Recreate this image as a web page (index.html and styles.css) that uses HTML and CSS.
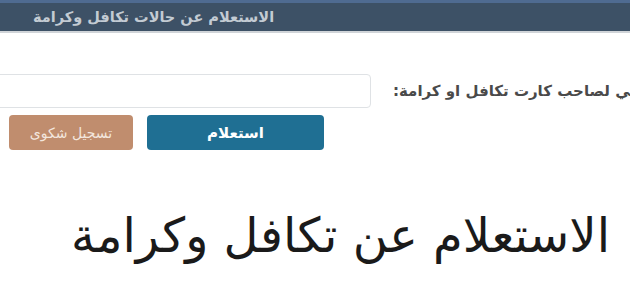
FILE: index.html
```html
<!DOCTYPE html>
<html lang="ar">
<head>
<meta charset="utf-8">
<link rel="stylesheet" href="styles.css">
</head>
<body>
<header class="topbar">
  <span class="topbar-title" dir="rtl">الاستعلام عن حالات تكافل وكرامة</span>
</header>
<main class="content">
  <div class="form-row">
    <input class="field" type="text">
    <label class="field-label" dir="rtl">الرقم القومي لصاحب كارت تكافل او كرامة:</label>
  </div>
  <div class="button-row">
    <button class="btn btn-complaint" dir="rtl">تسجيل شكوى</button>
    <button class="btn btn-query" dir="rtl">استعلام</button>
  </div>
  <h1 class="page-title" dir="rtl">الاستعلام عن تكافل وكرامة</h1>
</main>
</body>
</html>
```
FILE: styles.css
```css
html, body {
  margin: 0;
  padding: 0;
  background: #ffffff;
  overflow: hidden;
  width: 630px;
  height: 300px;
  font-family: "DejaVu Sans", sans-serif;
}
.topbar {
  height: 33px;
  background: #3d5166;
  border-top: 3px solid #4f6b91;
  box-sizing: border-box;
  border-bottom: 2px solid #d0d4d8;
  display: flex;
  align-items: center;
  padding-left: 33px;
}
.topbar-title {
  color: #c3cbd3;
  font-size: 14.5px;
  font-weight: bold;
  white-space: nowrap;
}
.content {
  display: flex;
  flex-direction: column;
}
.form-row {
  display: flex;
  align-items: center;
  margin-top: 41px;
  gap: 22px;
  white-space: nowrap;
}
.field {
  width: 381px;
  height: 34px;
  margin: 0 0 0 -10px;
  box-sizing: border-box;
  border: 1px solid #dfe2e5;
  border-radius: 4px;
  background: #fff;
  flex: none;
}
.field-label {
  color: #4a4a4a;
  font-size: 15px;
  font-weight: bold;
  flex: none;
}
.button-row {
  display: flex;
  gap: 14px;
  margin-top: 7px;
  padding-left: 9px;
}
.btn {
  height: 35px;
  border: none;
  border-radius: 4px;
  font-family: "DejaVu Sans", sans-serif;
  font-weight: bold;
  color: #fff;
  padding: 0;
}
.btn-complaint {
  width: 124px;
  background: #c08d6e;
  color: #f3e6dd;
  font-weight: normal;
  font-size: 14px;
}
.btn-query {
  width: 177px;
  background: #1f6f93;
  font-size: 15px;
}
.page-title {
  margin: 57px 20px 0 0;
  text-align: right;
  font-size: 48px;
  font-weight: normal;
  color: #1a1a1a;
  line-height: 57px;
}
```
